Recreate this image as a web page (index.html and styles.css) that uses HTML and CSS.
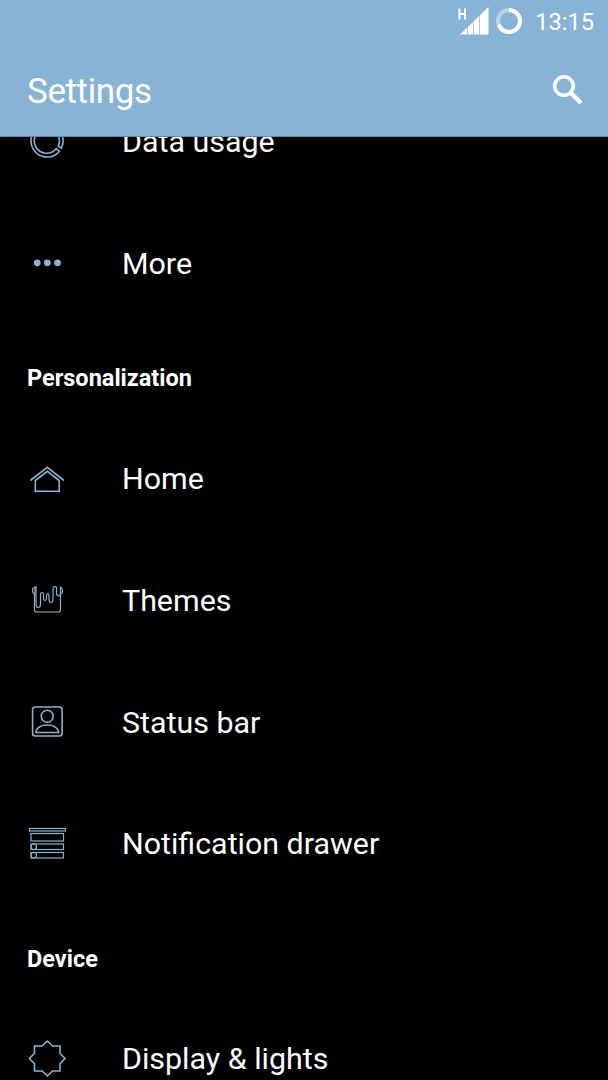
FILE: index.html
```html
<!DOCTYPE html>
<html lang="en">
<head>
    <meta charset="utf-8">
    <meta name="viewport" content="width=device-width,initial-scale=1">
    <title>Settings</title>
    <link rel="stylesheet" href="styles.css">
</head>
<body>
    <div class="screen">
        <header class="header">
            <div class="status">
                <svg class="signal" width="32" height="30" viewBox="0 0 32 30">
                    <path d="M2.500 1.500v11M8 1.500v11M2.500 7H8" fill="none" stroke="#fff" stroke-width="2"/>
                    <path d="M3 27.500 31.500 0V27.500z" fill="#fff"/>
                    <path d="M10.500 20v8M16.500 14v14M22.500 8v20" stroke="#a9cbe2" stroke-width="1"/>
                </svg>
                <svg class="battery" width="28" height="28" viewBox="0 0 28 28">
                    <circle cx="14" cy="14" r="11" fill="none" stroke="#b6d5ec" stroke-width="4"/>
                    <path d="M14 3a11 11 0 1 1-10.300 14.800" fill="none" stroke="#fff" stroke-width="4"/>
                </svg>
                <span class="clock">13:15</span>
            </div>
            <div class="bar">
                <h1 class="title">Settings</h1>
                <svg class="search" width="32" height="32" viewBox="0 0 32 32">
                    <circle cx="12" cy="12" r="9.300" fill="none" stroke="#fff" stroke-width="3.400"/>
                    <path d="M18.500 18.500 29 29" stroke="#fff" stroke-width="4.400"/>
                </svg>
            </div>
        </header>
        <main class="list">
            <div class="item first">
                <svg class="icon" viewBox="0 0 40 40">
                    <path d="M20 3A16 16 0 1 0 32.200 29.400L29.300 26.600A12.300 12.300 0 1 1 20 6.700z"/>
                    <path d="M23 3.300A16 16 0 0 1 34.300 26.200L31.200 24.200A12.300 12.300 0 0 0 23 7z"/>
                </svg>
                <span class="label">Data usage</span>
            </div>
            <div class="item">
                <svg class="icon dots" viewBox="0 0 40 40">
                    <circle cx="10.200" cy="18.800" r="3.400"/>
                    <circle cx="20.300" cy="18.800" r="3.400"/>
                    <circle cx="30.500" cy="18.800" r="3.400"/>
                </svg>
                <span class="label">More</span>
            </div>
            <h2 class="group">Personalization</h2>
            <div class="item">
                <svg class="icon" viewBox="0 0 40 40">
                    <path d="M3.300 21.500 20.300 8.300 37 21.500"/>
                    <path d="M8.300 32.200V21.500L20.300 12.300 32.200 21.500V32.200z"/>
                </svg>
                <span class="label">Home</span>
            </div>
            <div class="item">
                <svg class="icon thin" viewBox="0 0 40 40">
                    <path d="M7.500 14V29.500Q7.500 32 10 32H31Q33.500 32 33.500 29.500V14"/>
                    <path d="M8 6.500V14Q5.500 13.500 5.500 10.500T8 7.500M33.500 7.500Q35.500 8 35.500 10.800T33.500 14"/>
                    <path d="M9 6V24.500Q9.200 27.500 11.300 27.500T13.500 24.500V15Q13.500 12.500 15 12.500T16.500 15V18Q16.700 20.500 18 20.500T19.500 18V16Q19.700 13.500 20.800 13.500T22 16V20Q22.200 22.500 24 22.500T26 20V9Q26.200 6.500 28 6.500T29.500 9V13.500Q29.700 16 31.500 16T33.500 13.500V6.500"/>
                </svg>
                <span class="label">Themes</span>
            </div>
            <div class="item">
                <svg class="icon" viewBox="0 0 40 40">
                    <rect x="5.600" y="5" width="29.500" height="29" rx="2.500"/>
                    <circle cx="20.200" cy="14.200" r="6"/>
                    <path d="M9 30.500V29.200C10.500 25 15 23 20.200 23S30 25 31.500 29.200V30.500z"/>
                </svg>
                <span class="label">Status bar</span>
            </div>
            <div class="item">
                <svg class="icon thin" viewBox="0 0 40 40">
                    <rect x="2.500" y="4.500" width="36" height="2.500"/>
                    <rect x="4" y="9.500" width="32.500" height="7.500"/>
                    <rect x="4" y="20" width="32.500" height="5.500"/>
                    <rect x="4" y="28.500" width="32.500" height="5.500"/>
                    <circle cx="6.700" cy="22.700" r="2.800"/>
                    <circle cx="6.700" cy="31.200" r="2.800"/>
                </svg>
                <span class="label">Notification drawer</span>
            </div>
            <h2 class="group">Device</h2>
            <div class="item">
                <svg class="icon" viewBox="0 0 40 40">
                    <path d="M20.300 2 25.500 7H33V14.200L38 19.500 33 24.700V32H25.500L20.300 37 15.100 32H7.500V24.700L2.500 19.500 7.500 14.200V7H15.100z"/>
                </svg>
                <span class="label">Display &amp; lights</span>
            </div>
        </main>
    </div>
</body>
</html>
```
FILE: styles.css
```css
body{
    margin: 0;
    background: #000;
    color: #fff;
    font-family: Roboto, "Liberation Sans", sans-serif;
}
.screen{
    display: flex;
    flex-direction: column;
    height: 1080px;
    overflow: hidden;
}
.header{
    flex: none;
    height: 136px;
    background: #88b3d4;
    border-bottom: 1px solid #658aa8;
}
.status{
    display: flex;
    align-items: center;
    justify-content: flex-end;
    height: 44px;
    padding-right: 14px;
}
.battery{
    margin: 0 12px 2px 6px;
}
.clock{
    font-size: 23.6px;
    line-height: 44px;
}
.bar{
    display: flex;
    align-items: center;
    justify-content: space-between;
    height: 94px;
    padding: 0 24px 0 27px;
}
.title{
    margin: 0;
    font-size: 35px;
    font-weight: 400;
    letter-spacing: -0.4px;
}
.search{
    margin-bottom: 3px;
}
.list{
    flex: 1;
    min-height: 0;
    overflow: hidden;
}
.item{
    display: flex;
    align-items: center;
    gap: 55px;
    height: 121.7px;
    padding-left: 27px;
}
.first{
    margin-top: -56px;
}
.icon{
    flex: none;
    width: 40px;
    height: 40px;
    fill: none;
    stroke: #88b0d0;
    stroke-width: 1.6;
}
.thin{
    stroke-width: 1.2;
}
.dots{
    fill: #8fb0cd;
    stroke: none;
}
.label{
    font-size: 30.4px;
    white-space: nowrap;
}
.group{
    margin: 0;
    padding-left: 27px;
    height: 93.5px;
    line-height: 108px;
    font-size: 23.5px;
    font-weight: 700;
}
```
